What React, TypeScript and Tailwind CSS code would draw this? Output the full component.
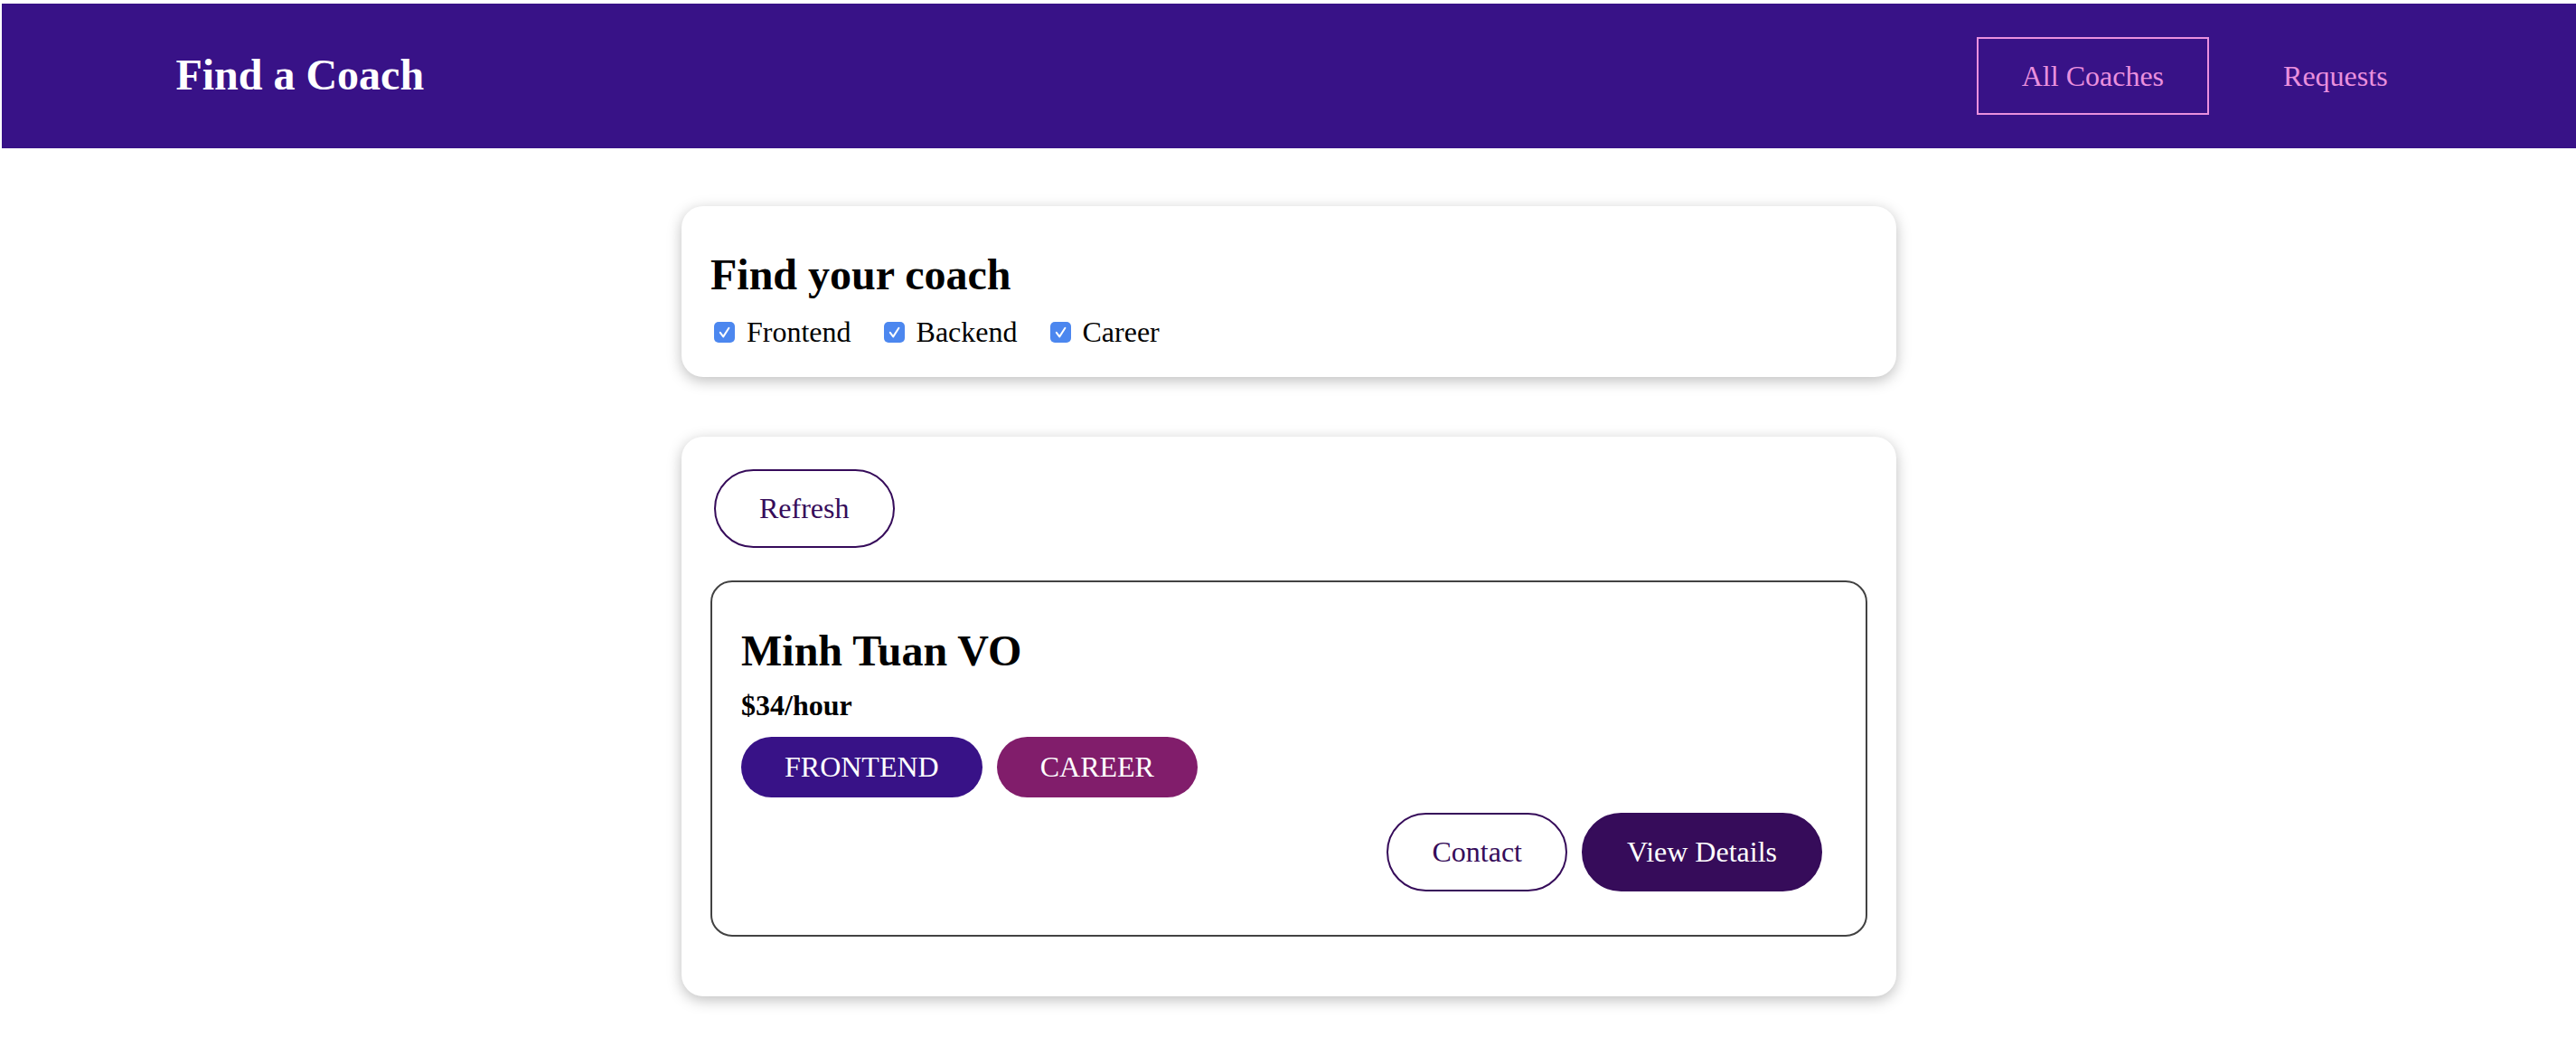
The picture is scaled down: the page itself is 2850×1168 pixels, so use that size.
import { useState } from "react";

const areas = [
    { id: "frontend", label: "Frontend" },
    { id: "backend", label: "Backend" },
    { id: "career", label: "Career" },
];

const Checkbox = ({ checked }: { checked: boolean }) => (
    <span
        className={
            checked
                ? "ml-[4px] flex h-[23px] w-[23px] items-center justify-center rounded-[5px] bg-[#4c87ef]"
                : "ml-[4px] flex h-[23px] w-[23px] items-center justify-center rounded-[5px] border-2 border-gray-400 bg-white"
        }
    >
        {checked && (
            <svg width="23" height="23" viewBox="0 0 23 23" fill="none">
                <path d="M6.8 11.8 L10.2 16.4 L16.4 6.8" stroke="white" strokeWidth="2" strokeLinecap="round" strokeLinejoin="round" />
            </svg>
        )}
    </span>
);

const App = () => {
    const [filters, setFilters] = useState<Record<string, boolean>>({
        frontend: true,
        backend: true,
        career: true,
    });

    return (
        <div className="min-h-screen bg-white pt-[4px] pl-[2px] font-['Liberation_Serif',serif] text-black">
            {/* Header */}
            <header className="flex h-[160px] w-full items-center bg-[#381287]">
                <nav className="mx-auto flex w-[90%] items-center justify-between">
                    <h1 className="m-0">
                        <a href="#" className="inline-block border-2 border-transparent px-[48px] pt-[22px] pb-[26px] text-[48px] leading-[53px] font-bold text-white">
                            Find a Coach
                        </a>
                    </h1>
                    <ul className="flex items-center">
                        <li className="mx-[16px]">
                            <a href="#" className="inline-block border-2 border-[#ea90de] px-[48px] py-[23px] text-[32px] leading-[36px] text-[#ea90de]">
                                All Coaches
                            </a>
                        </li>
                        <li className="mx-[16px]">
                            <a href="#" className="inline-block border-2 border-transparent px-[48px] py-[23px] text-[32px] leading-[36px] text-[#ea90de]">
                                Requests
                            </a>
                        </li>
                    </ul>
                </nav>
            </header>

            {/* Filter */}
            <section className="mx-auto mt-[64px] w-[1344px] rounded-[24px] bg-white p-[32px] shadow-[0_4px_16px_rgba(0,0,0,0.26)]">
                <h2 className="mt-[17px] text-[48px] leading-[53px] font-bold">Find your coach</h2>
                <div className="mt-[20px] flex items-center">
                    {areas.map(area => (
                        <label
                            key={area.id}
                            onClick={() => setFilters({ ...filters, [area.id]: !filters[area.id] })}
                            className="mr-[32px] flex cursor-pointer items-center"
                        >
                            <Checkbox checked={filters[area.id]} />
                            <span className="ml-[13px] text-[32px] leading-[35px]">{area.label}</span>
                        </label>
                    ))}
                </div>
            </section>

            {/* Coaches */}
            <section className="mx-auto mt-[66px] w-[1344px] rounded-[24px] bg-white p-[32px] shadow-[0_4px_16px_rgba(0,0,0,0.26)]">
                <div>
                    <button className="mt-[4px] ml-[4px] rounded-[60px] border-2 border-[#360c5a] bg-white px-[48px] py-[24px] text-[32px] leading-[35px] text-[#360c5a]">
                        Refresh
                    </button>
                </div>
                <ul className="mt-[36px] mb-[34px]">
                    <li className="rounded-[24px] border-2 border-[#424242] p-[32px]">
                        <h3 className="mt-[17px] text-[48px] leading-[53px] font-bold">Minh Tuan VO</h3>
                        <h4 className="mt-[17px] text-[32px] leading-[35px] font-bold">$34/hour</h4>
                        <div className="mt-[17px] flex">
                            <span className="mr-[16px] rounded-[60px] bg-[#381287] px-[48px] py-[16px] text-[32px] leading-[35px] text-white">
                                FRONTEND
                            </span>
                            <span className="mr-[16px] rounded-[60px] bg-[#811d6b] px-[48px] py-[16px] text-[32px] leading-[35px] text-white">
                                CAREER
                            </span>
                        </div>
                        <div className="mt-[17px] mb-[16px] flex justify-end">
                            <a href="#" className="mr-[16px] inline-block rounded-[60px] border-2 border-[#360c5a] bg-white px-[48px] py-[24px] text-[32px] leading-[35px] text-[#360c5a]">
                                Contact
                            </a>
                            <a href="#" className="mr-[16px] inline-block rounded-[60px] border-2 border-[#360c5a] bg-[#360c5a] px-[48px] py-[24px] text-[32px] leading-[35px] text-white">
                                View Details
                            </a>
                        </div>
                    </li>
                </ul>
            </section>
        </div>
    );
};

export default App;
